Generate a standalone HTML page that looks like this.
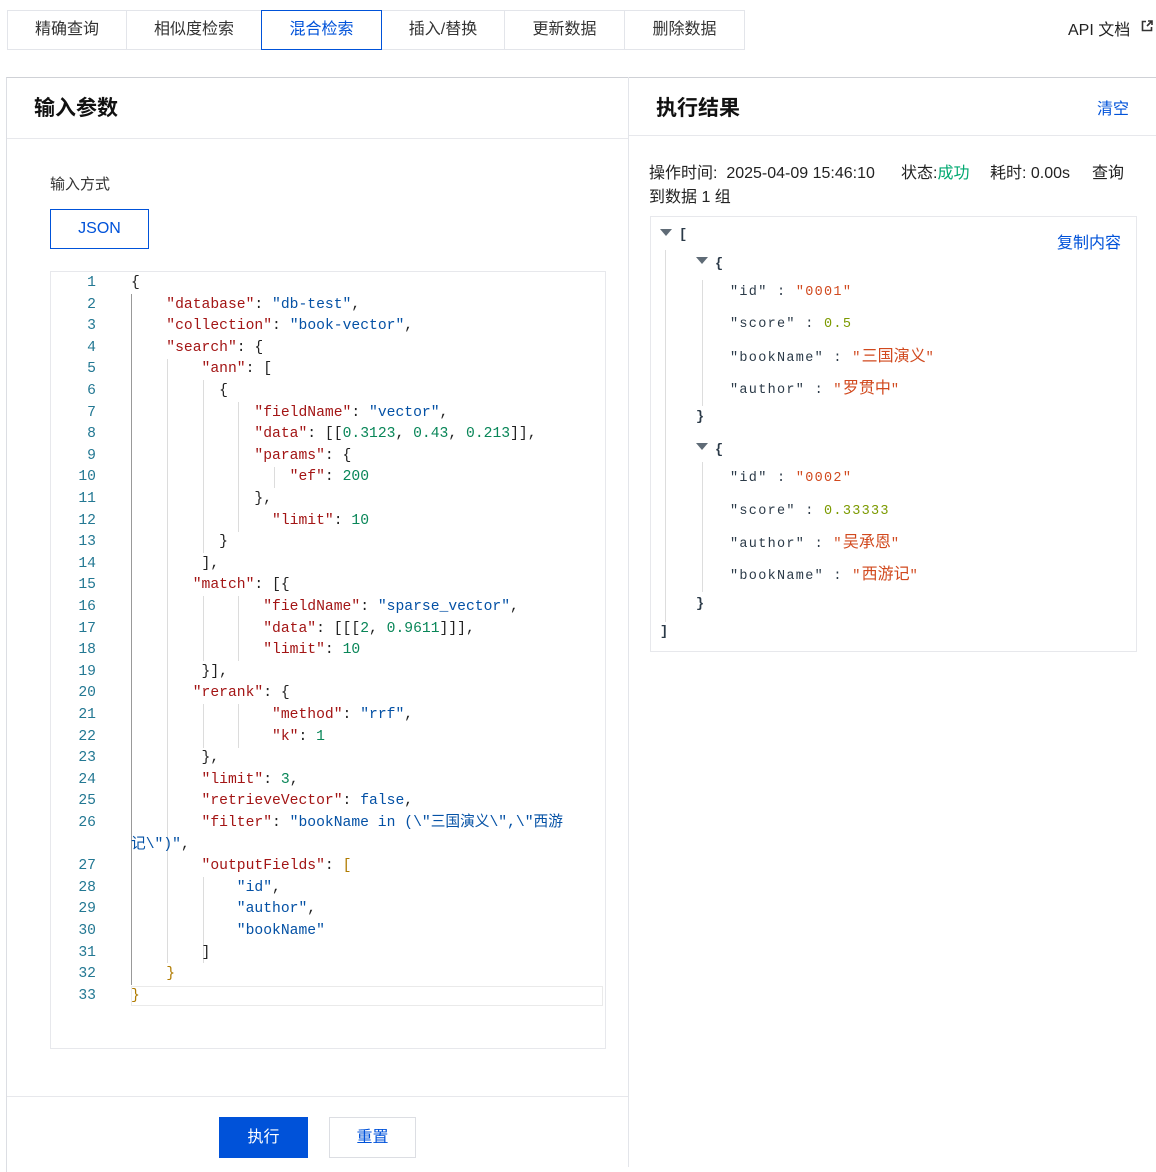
<!DOCTYPE html>
<html><head><meta charset="utf-8">
<style>
*{box-sizing:border-box;margin:0;padding:0}
body{width:1156px;height:1167px;background:#fff;position:relative;overflow:hidden;font-family:"Liberation Sans","Noto Sans CJK SC",sans-serif;color:#222}
.a{position:absolute}
.tab{position:absolute;top:10px;height:40px;border:1px solid #e3e5ea;font-size:16px;line-height:38px;text-align:center;color:#333}
.tab.on{border:1px solid #0052d9;color:#0052d9;z-index:2}
.code{font-family:"Liberation Mono","Noto Sans CJK SC",monospace;font-size:14.7px;white-space:pre}
.ln{position:absolute;width:46px;left:50px;text-align:right;color:#237893;font-family:"Liberation Mono",monospace;font-size:14.7px;line-height:22px}
.cl{position:absolute;left:131px;line-height:22px;color:#222}
.k{color:#a31515}.s{color:#0451a5}.n{color:#098658}.b{color:#b07b00}
.g{position:absolute;width:1px;background:#dcdcdc}
.rj{font-family:"Liberation Mono","Noto Sans CJK SC",monospace;font-size:13.5px;letter-spacing:1.3px;position:absolute;line-height:20px;color:#2b3a48;white-space:pre}
.rs{color:#d1491e}.rn{color:#7c9a00}
.cj{font-size:16px;letter-spacing:0}
.tri{position:absolute;width:0;height:0;border-left:6px solid transparent;border-right:6px solid transparent;border-top:7px solid #5f6b76}
</style></head><body>

<div class="tab" style="left:7px;width:120px">精确查询</div>
<div class="tab" style="left:126px;width:136px">相似度检索</div>
<div class="tab on" style="left:261px;width:121px">混合检索</div>
<div class="tab" style="left:381px;width:124px">插入/替换</div>
<div class="tab" style="left:504px;width:121px">更新数据</div>
<div class="tab" style="left:624px;width:121px">删除数据</div>
<div class="a" style="left:1068px;top:16px;font-size:16px;color:#222">API 文档</div>
<svg class="a" style="left:1141px;top:20px" width="12" height="12" viewBox="0 0 12 12"><path d="M5 1.5H1.5v9h9V7" fill="none" stroke="#333" stroke-width="1.6"/><path d="M7 1h4v4M11 1L6 6" fill="none" stroke="#333" stroke-width="1.6"/></svg>

<div class="a" style="left:6px;top:77px;width:1150px;height:1095px;border-top:1px solid #cfd1d6;border-left:1px solid #dcdee3"></div>
<div class="a" style="left:628px;top:77px;width:1px;height:1090px;background:#e3e5ea"></div>
<div class="a" style="left:7px;top:138px;width:621px;height:1px;background:#e7e8ec"></div>
<div class="a" style="left:629px;top:135px;width:527px;height:1px;background:#e7e8ec"></div>
<div class="a" style="left:34px;top:92px;font-size:21px;font-weight:bold;color:#111">输入参数</div>
<div class="a" style="left:656px;top:92px;font-size:21px;font-weight:bold;color:#111">执行结果</div>
<div class="a" style="left:1097px;top:95px;font-size:16px;color:#0052d9">清空</div>

<div class="a" style="left:50px;top:173px;font-size:15px;color:#333">输入方式</div>
<div class="a" style="left:50px;top:209px;width:99px;height:40px;border:1px solid #0052d9;color:#0052d9;font-size:16px;line-height:38px;text-align:center">JSON</div>

<div class="a" style="left:50px;top:271px;width:556px;height:778px;border:1px solid #e7e8ec"></div>
<div class="a" style="left:131px;top:986px;width:472px;height:20px;border:1px solid #eaeaea"></div>

<div class="g" style="left:131px;top:294px;height:691px;background:#999"></div>
<div class="g" style="left:167px;top:359px;height:604px"></div>
<div class="g" style="left:203px;top:380px;height:173px"></div>
<div class="g" style="left:238px;top:402px;height:130px"></div>
<div class="g" style="left:274px;top:467px;height:21px"></div>
<div class="g" style="left:203px;top:596px;height:65px"></div>
<div class="g" style="left:238px;top:596px;height:65px"></div>
<div class="g" style="left:203px;top:704px;height:44px"></div>
<div class="g" style="left:238px;top:704px;height:44px"></div>
<div class="g" style="left:203px;top:877px;height:86px"></div>

<div class="code">
<div class="ln" style="top:272px">1</div><div class="cl" style="top:272px">{</div>
<div class="ln" style="top:294px">2</div><div class="cl" style="top:294px">    <span class="k">"database"</span>: <span class="s">"db-test"</span>,</div>
<div class="ln" style="top:315px">3</div><div class="cl" style="top:315px">    <span class="k">"collection"</span>: <span class="s">"book-vector"</span>,</div>
<div class="ln" style="top:337px">4</div><div class="cl" style="top:337px">    <span class="k">"search"</span>: {</div>
<div class="ln" style="top:358px">5</div><div class="cl" style="top:358px">        <span class="k">"ann"</span>: [</div>
<div class="ln" style="top:380px">6</div><div class="cl" style="top:380px">          {</div>
<div class="ln" style="top:402px">7</div><div class="cl" style="top:402px">              <span class="k">"fieldName"</span>: <span class="s">"vector"</span>,</div>
<div class="ln" style="top:423px">8</div><div class="cl" style="top:423px">              <span class="k">"data"</span>: [[<span class="n">0.3123</span>, <span class="n">0.43</span>, <span class="n">0.213</span>]],</div>
<div class="ln" style="top:445px">9</div><div class="cl" style="top:445px">              <span class="k">"params"</span>: {</div>
<div class="ln" style="top:466px">10</div><div class="cl" style="top:466px">                  <span class="k">"ef"</span>: <span class="n">200</span></div>
<div class="ln" style="top:488px">11</div><div class="cl" style="top:488px">              },</div>
<div class="ln" style="top:510px">12</div><div class="cl" style="top:510px">                <span class="k">"limit"</span>: <span class="n">10</span></div>
<div class="ln" style="top:531px">13</div><div class="cl" style="top:531px">          }</div>
<div class="ln" style="top:553px">14</div><div class="cl" style="top:553px">        ],</div>
<div class="ln" style="top:574px">15</div><div class="cl" style="top:574px">       <span class="k">"match"</span>: [{</div>
<div class="ln" style="top:596px">16</div><div class="cl" style="top:596px">               <span class="k">"fieldName"</span>: <span class="s">"sparse_vector"</span>,</div>
<div class="ln" style="top:618px">17</div><div class="cl" style="top:618px">               <span class="k">"data"</span>: [[[<span class="n">2</span>, <span class="n">0.9611</span>]]],</div>
<div class="ln" style="top:639px">18</div><div class="cl" style="top:639px">               <span class="k">"limit"</span>: <span class="n">10</span></div>
<div class="ln" style="top:661px">19</div><div class="cl" style="top:661px">        }],</div>
<div class="ln" style="top:682px">20</div><div class="cl" style="top:682px">       <span class="k">"rerank"</span>: {</div>
<div class="ln" style="top:704px">21</div><div class="cl" style="top:704px">                <span class="k">"method"</span>: <span class="s">"rrf"</span>,</div>
<div class="ln" style="top:726px">22</div><div class="cl" style="top:726px">                <span class="k">"k"</span>: <span class="n">1</span></div>
<div class="ln" style="top:747px">23</div><div class="cl" style="top:747px">        },</div>
<div class="ln" style="top:769px">24</div><div class="cl" style="top:769px">        <span class="k">"limit"</span>: <span class="n">3</span>,</div>
<div class="ln" style="top:790px">25</div><div class="cl" style="top:790px">        <span class="k">"retrieveVector"</span>: <span class="s">false</span>,</div>
<div class="ln" style="top:812px">26</div><div class="cl" style="top:812px">        <span class="k">"filter"</span>: <span class="s">"bookName in (\"三国演义\",\"西游</span></div>
<div class="cl" style="top:834px"><span class="s">记\")"</span>,</div>
<div class="ln" style="top:855px">27</div><div class="cl" style="top:855px">        <span class="k">"outputFields"</span>: <span class="b">[</span></div>
<div class="ln" style="top:877px">28</div><div class="cl" style="top:877px">            <span class="s">"id"</span>,</div>
<div class="ln" style="top:898px">29</div><div class="cl" style="top:898px">            <span class="s">"author"</span>,</div>
<div class="ln" style="top:920px">30</div><div class="cl" style="top:920px">            <span class="s">"bookName"</span></div>
<div class="ln" style="top:942px">31</div><div class="cl" style="top:942px">        ]</div>
<div class="ln" style="top:963px">32</div><div class="cl" style="top:963px">    <span class="b">}</span></div>
<div class="ln" style="top:985px">33</div><div class="cl" style="top:985px"><span class="b">}</span></div>
</div>

<div class="a" style="left:7px;top:1096px;width:621px;height:1px;background:#e7e8ec"></div>
<div class="a" style="left:219px;top:1117px;width:89px;height:41px;background:#0052d9;color:#fff;font-size:16px;line-height:41px;text-align:center">执行</div>
<div class="a" style="left:329px;top:1117px;width:87px;height:41px;border:1px solid #dcdee3;color:#0052d9;font-size:16px;line-height:39px;text-align:center">重置</div>

<div class="a" style="left:649px;top:159px;font-size:16px;color:#222;white-space:nowrap">操作时间:&nbsp; 2025-04-09 15:46:10</div>
<div class="a" style="left:901px;top:159px;font-size:16px;color:#222">状态:<span style="color:#00a870">成功</span></div>
<div class="a" style="left:990px;top:159px;font-size:16px;color:#222">耗时: 0.00s</div>
<div class="a" style="left:1092px;top:159px;font-size:16px;color:#222">查询</div>
<div class="a" style="left:649px;top:183px;font-size:16px;color:#222">到数据 1 组</div>

<div class="a" style="left:650px;top:216px;width:487px;height:436px;border:1px solid #e7e8ec"></div>
<div class="a" style="left:1057px;top:229px;font-size:16px;color:#0052d9">复制内容</div>
<div class="g" style="left:665px;top:250px;height:372px;background:#ddd"></div>
<div class="g" style="left:702px;top:280px;height:126px;background:#ddd"></div>
<div class="g" style="left:702px;top:462px;height:130px;background:#ddd"></div>
<div class="tri" style="left:660px;top:229px"></div>
<div class="rj" style="left:679px;top:226px;font-weight:bold">[</div>
<div class="tri" style="left:696px;top:257px"></div>
<div class="rj" style="left:715px;top:255px;font-weight:bold">{</div>
<div class="rj" style="left:730px;top:283px">"id" : <span class="rs">"0001"</span></div>
<div class="rj" style="left:730px;top:315px">"score" : <span class="rn">0.5</span></div>
<div class="rj" style="left:730px;top:347px">"bookName" : <span class="rs">"<span class="cj">三国演义</span>"</span></div>
<div class="rj" style="left:730px;top:379px">"author" : <span class="rs">"<span class="cj">罗贯中</span>"</span></div>
<div class="rj" style="left:696px;top:408px;font-weight:bold">}</div>
<div class="tri" style="left:696px;top:443px"></div>
<div class="rj" style="left:715px;top:441px;font-weight:bold">{</div>
<div class="rj" style="left:730px;top:469px">"id" : <span class="rs">"0002"</span></div>
<div class="rj" style="left:730px;top:502px">"score" : <span class="rn">0.33333</span></div>
<div class="rj" style="left:730px;top:533px">"author" : <span class="rs">"<span class="cj">吴承恩</span>"</span></div>
<div class="rj" style="left:730px;top:565px">"bookName" : <span class="rs">"<span class="cj">西游记</span>"</span></div>
<div class="rj" style="left:696px;top:595px;font-weight:bold">}</div>
<div class="rj" style="left:660px;top:623px;font-weight:bold">]</div>
</body></html>
